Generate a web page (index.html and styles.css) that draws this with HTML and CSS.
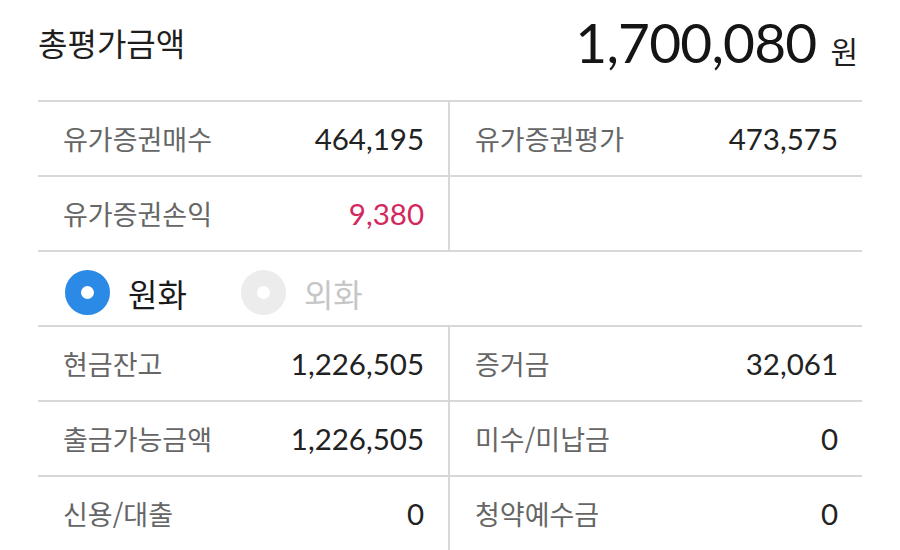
FILE: index.html
```html
<!DOCTYPE html>
<html lang="ko">
<head>
<meta charset="utf-8">
<link rel="stylesheet" href="styles.css">
</head>
<body>
<div class="page">
  <header class="summary">
    <h1 class="summary-title">총평가금액</h1>
    <div class="summary-amount"><span class="amount">1,700,080</span><span class="unit">원</span></div>
  </header>

  <div class="grid">
    <div class="cell left"><span class="label">유가증권매수</span><span class="value">464,195</span></div>
    <div class="cell"><span class="label">유가증권평가</span><span class="value">473,575</span></div>
    <div class="cell left"><span class="label">유가증권손익</span><span class="value red">9,380</span></div>
    <div class="cell"></div>
  </div>

  <div class="radio-row">
    <label class="radio on"><span class="dot"></span><span class="radio-text">원화</span></label>
    <label class="radio off"><span class="dot"></span><span class="radio-text">외화</span></label>
  </div>

  <div class="grid">
    <div class="cell left"><span class="label">현금잔고</span><span class="value">1,226,505</span></div>
    <div class="cell"><span class="label">증거금</span><span class="value">32,061</span></div>
    <div class="cell left"><span class="label">출금가능금액</span><span class="value">1,226,505</span></div>
    <div class="cell"><span class="label">미수/미납금</span><span class="value">0</span></div>
    <div class="cell left"><span class="label">신용/대출</span><span class="value">0</span></div>
    <div class="cell"><span class="label">청약예수금</span><span class="value">0</span></div>
  </div>
</div>
</body>
</html>
```

FILE: styles.css
```css
html, body {
  margin: 0;
  padding: 0;
  background: #ffffff;
}

body {
  font-family: "Lato", "Noto Sans CJK KR", "Noto Sans", sans-serif;
  color: #222222;
}

.page {
  width: 824px;
  margin-left: 38px;
}

.summary {
  height: 100px;
  display: flex;
  justify-content: space-between;
  align-items: center;
  padding-bottom: 16px;
  box-sizing: border-box;
}

.summary-title {
  margin: 0;
  font-family: "Noto Sans CJK KR", sans-serif;
  font-weight: 400;
  font-size: 32px;
  color: #1e1e1e;
}

.summary-amount {
  display: flex;
  align-items: baseline;
  gap: 14px;
  margin-right: 4px;
}

.amount {
  font-family: "Lato", sans-serif;
  font-size: 55px;
  color: #151515;
  letter-spacing: -0.8px;
}

.unit {
  font-family: "Noto Sans CJK KR", sans-serif;
  font-size: 30px;
  color: #1e1e1e;
}

.grid {
  display: grid;
  grid-template-columns: 412px 1fr;
}

.cell {
  height: 75px;
  box-sizing: border-box;
  border-top: 2px solid #d8d8d8;
  display: flex;
  align-items: center;
  justify-content: space-between;
  padding: 0 24px 0 25px;
}

.cell.left {
  border-right: 2px solid #d8d8d8;
}

.label {
  font-family: "Noto Sans CJK KR", sans-serif;
  font-size: 27px;
  color: #666666;
}

.value {
  font-family: "Lato", sans-serif;
  font-size: 29.5px;
  color: #222222;
}

.value.red {
  color: #d2285e;
}

.radio-row {
  height: 75px;
  box-sizing: border-box;
  border-top: 2px solid #d8d8d8;
  display: flex;
  align-items: center;
  padding: 8px 0 0 27px;
  gap: 54px;
}

.radio {
  display: flex;
  align-items: center;
  gap: 18px;
}

.dot {
  width: 45px;
  height: 45px;
  box-sizing: border-box;
  border-radius: 50%;
  border: 16px solid #2b8ae6;
  background: #ffffff;
}

.radio.off .dot {
  border-color: #ececec;
}

.radio-text {
  font-family: "Noto Sans CJK KR", sans-serif;
  font-size: 32px;
  color: #1a1a1a;
}

.radio.off .radio-text {
  color: #c6c6c6;
}
```
